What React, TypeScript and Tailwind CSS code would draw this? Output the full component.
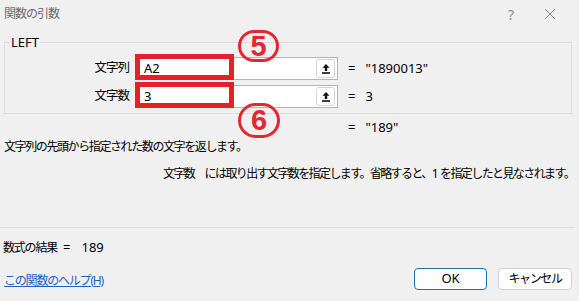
import React from "react";

const font = "font-['Noto_Sans','Noto_Sans_CJK_JP',sans-serif]";

function UpBtn() {
  return (
    <div className="w-[19px] h-[19px] mr-[2px] rounded-[3px] border border-[#d6d6d6] bg-white flex items-center justify-center">
      <svg width="10" height="11" viewBox="0 0 10 11">
        <path d="M5 1 L1.5 4.8 H3.8 V8 H6.2 V4.8 H8.5 Z" fill="#111" />
        <rect x="1" y="9.2" width="8" height="1.6" fill="#111" />
      </svg>
    </div>
  );
}

function Row({ label, value, result }: { label: string; value: string; result: string }) {
  return (
    <div className="flex items-center h-[23px]">
      <div className="w-[125px] pr-[1px] text-right text-[12.5px] tracking-[-1px] text-black">{label}</div>
      <div className="ml-[7px] relative w-[201px] h-[23px] bg-white border border-[#b4b4b4] flex items-center justify-between">
        <span className="pl-[6px] text-[13px] text-black">{value}</span>
        <UpBtn />
        <div className="absolute left-[-3px] top-[-4px] w-[99px] h-[26px] border-[5px] border-[#e5202a]" />
      </div>
      <span className="ml-[10px] text-[13px] text-black">=</span>
      <span className="ml-[10px] text-[13px] text-black">{result}</span>
    </div>
  );
}

function Circle({ n, cls }: { n: string; cls: string }) {
  return (
    <div
      className={
        "absolute rounded-full border-[3px] border-[#e4262f] flex items-center justify-center text-[#e4262f] font-bold text-[29px] leading-none font-['Liberation_Sans',sans-serif] " +
        cls
      }
    >
      {n}
    </div>
  );
}

export default function App() {
  return (
    <div className={"relative w-[579px] h-[301px] bg-[#f0f0f0] overflow-hidden " + font}>
      {/* title bar */}
      <div className="h-[28px] flex items-center justify-between pl-[4px] pr-[23px]">
        <span className="text-[12px] tracking-[-1px] text-[#6b6b6b]">関数の引数</span>
        <div className="flex items-center gap-[30px] text-[#8a8a8a]">
          <span className="text-[14px]">?</span>
          <svg width="12" height="12" viewBox="0 0 12 12">
            <path d="M1 1 L11 11 M11 1 L1 11" stroke="#8a8a8a" strokeWidth="1" />
          </svg>
        </div>
      </div>

      <fieldset className="mt-[6px] ml-[4px] w-[568px] h-[80px] border border-[#dcdcdc] px-0">
        <legend className="ml-[5px] px-[1px] text-[13px] leading-[17px] text-black">LEFT</legend>
        <div className="mt-[6px] flex flex-col gap-[5px]">
          <Row label="文字列" value="A2" result={'"1890013"'} />
          <Row label="文字数" value="3" result="3" />
        </div>
      </fieldset>

      <div className="mt-[6px] h-[16px] flex items-center pl-[348px] text-[13px] text-black">
        <span>=</span>
        <span className="ml-[10px]">"189"</span>
      </div>

      <div className="mt-[2px] pl-[4px] text-[12px] tracking-[-1.4px] text-black leading-[18px]">
        文字列の先頭から指定された数の文字を返します。
      </div>
      <div className="mt-[9px] pl-[163px] text-[12px] tracking-[-1.6px] text-black leading-[18px] whitespace-nowrap">
        文字数　には取り出す文字数を指定します。省略すると、1&nbsp; を指定したと見なされます。
      </div>

      <div className="mt-[44px] h-px bg-[#dcdcdc] mr-[4px]" />

      <div className="mt-[11px] pl-[3px] flex items-center text-black h-[18px]">
        <span className="text-[12px] tracking-[-1.2px]">数式の結果</span>
        <span className="ml-[6px] text-[13px]">=</span>
        <span className="ml-[11px] text-[13px]">189</span>
      </div>

      <div className="mt-[11px] flex items-center justify-between pl-[4px] pr-[7px]">
        <a className="text-[12px] tracking-[-1.2px] text-[#1f5fbf] underline mt-[3px]">この関数のヘルプ(H)</a>
        <div className="flex gap-[11px]">
          <button className="w-[73px] h-[22px] rounded-[4px] border border-[#1f6fb5] bg-[#fdfdfd] text-[13px] text-black">OK</button>
          <button className="w-[74px] h-[22px] rounded-[4px] border border-[#d0d0d0] bg-[#fdfdfd] text-[12px] tracking-[-1.4px] text-black">キャンセル</button>
        </div>
      </div>

      <Circle n="5" cls="left-[238px] top-[30px] w-[41px] h-[32px]" />
      <Circle n="6" cls="left-[238px] top-[103px] w-[42px] h-[35px]" />
    </div>
  );
}
